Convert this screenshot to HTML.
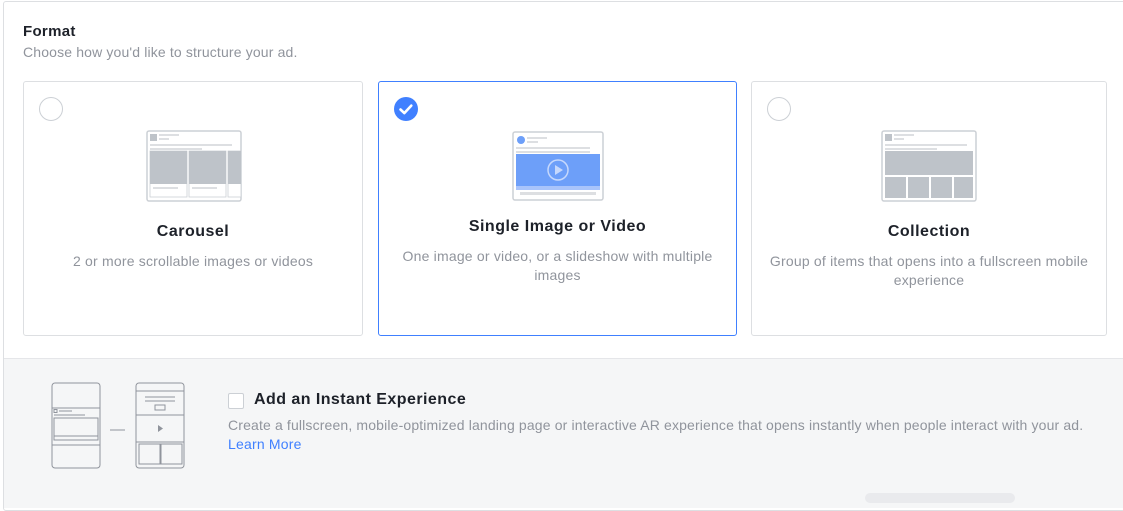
<!DOCTYPE html>
<html><head><meta charset="utf-8"><style>
*{box-sizing:border-box;margin:0;padding:0}
body{width:1123px;height:500px;overflow:hidden;background:#fff;font-family:"Liberation Sans",Arial,sans-serif;position:relative}
.frame{position:absolute;left:3px;top:1px;width:1130px;height:510px;border:1px solid #dddfe2;border-radius:3px;background:#fff}
.abs{position:absolute}
.card{position:absolute;top:81px;height:255px;border:1px solid #dddfe2;border-radius:3px;background:#fff}
.radio{position:absolute;left:15px;top:15px;width:24px;height:24px;border:1px solid #ccd0d5;border-radius:50%}
.title{position:absolute;left:0;right:0;text-align:center;font-weight:bold;font-size:16px;letter-spacing:.5px;color:#1d2129}
.desc{position:absolute;left:15px;right:15px;text-align:center;font-size:14px;letter-spacing:.2px;line-height:19px;color:#90949c}
.gray{position:absolute;left:4px;top:358px;width:1130px;height:150px;background:#f5f6f7;border-top:1px solid #e5e6e9}
</style></head><body>
<div class="frame"></div>
<div class="abs" style="left:23px;top:23px;font-size:15px;font-weight:bold;letter-spacing:.3px;color:#1d2129">Format</div>
<div class="abs" style="left:23px;top:44px;font-size:14px;letter-spacing:.15px;color:#90949c">Choose how you'd like to structure your ad.</div>

<div class="card" style="left:23px;width:340px">
  <div class="radio"></div>
  <svg class="abs" style="left:122px;top:48px" width="96" height="72" viewBox="0 0 96 72">
    <rect x="1" y="1" width="94" height="70" rx="2" fill="#fff" stroke="#ccd0d5" stroke-width="1.5"/>
    <rect x="4" y="4" width="7" height="7" fill="#bec3c9"/><rect x="13" y="4" width="20" height="2" fill="#dddfe2"/><rect x="13" y="8" width="10" height="2" fill="#dddfe2"/>
    <rect x="4" y="14" width="82" height="2" fill="#dddfe2"/><rect x="4" y="18" width="52" height="2" fill="#dddfe2"/>
    <rect x="4" y="21" width="37" height="46" fill="#fff" stroke="#ccd0d5" stroke-width=".8"/><rect x="4" y="21" width="37" height="33" fill="#bec3c9"/>
    <rect x="43" y="21" width="37" height="46" fill="#fff" stroke="#ccd0d5" stroke-width=".8"/><rect x="43" y="21" width="37" height="33" fill="#bec3c9"/>
    <rect x="82" y="21" width="13" height="46" fill="#fff" stroke="#ccd0d5" stroke-width=".8"/><rect x="82" y="21" width="13" height="33" fill="#bec3c9"/>
    <rect x="7" y="57" width="25" height="2" fill="#dddfe2"/><rect x="46" y="57" width="25" height="2" fill="#dddfe2"/>
  </svg>
  <div class="title" style="top:141px">Carousel</div>
  <div class="desc" style="top:170px">2 or more scrollable images or videos</div>
</div>

<div class="card" style="left:378px;width:359px;border-color:#4080ff">
  <svg class="abs" style="left:14px;top:14px" width="26" height="26" viewBox="0 0 26 26"><circle cx="13" cy="13" r="12" fill="#4080ff"/><path d="M7.5 13.5l3.8 3.6 7-7.5" fill="none" stroke="#fff" stroke-width="2.6" stroke-linecap="round" stroke-linejoin="round"/></svg>
  <svg class="abs" style="left:133px;top:49px" width="92" height="70" viewBox="0 0 92 70">
    <rect x="1" y="1" width="90" height="68" rx="2" fill="#fff" stroke="#ccd0d5" stroke-width="1.5"/>
    <circle cx="9" cy="9" r="4" fill="#6d9ff9"/><rect x="15" y="6" width="20" height="2" fill="#dddfe2"/><rect x="15" y="10" width="11" height="2" fill="#dddfe2"/>
    <rect x="4" y="16" width="74" height="2" fill="#dddfe2"/><rect x="4" y="20" width="74" height="2" fill="#dddfe2"/>
    <rect x="4" y="23" width="84" height="32" fill="#6d9ff9"/>
    <circle cx="46" cy="39" r="10" fill="none" stroke="#c6d8fc" stroke-width="1.5"/><path d="M43 34l8 5-8 5z" fill="#c6d8fc"/>
    <rect x="4" y="55" width="84" height="4" fill="#a9c4fb"/><rect x="8" y="61" width="76" height="3" fill="#dddfe2"/>
  </svg>
  <div class="title" style="top:136px">Single Image or Video</div>
  <div class="desc" style="top:165px">One image or video, or a slideshow with multiple images</div>
</div>

<div class="card" style="left:751px;width:356px">
  <div class="radio"></div>
  <svg class="abs" style="left:129px;top:48px" width="96" height="72" viewBox="0 0 96 72">
    <rect x="1" y="1" width="94" height="70" rx="2" fill="#fff" stroke="#ccd0d5" stroke-width="1.5"/>
    <rect x="4" y="4" width="7" height="7" fill="#bec3c9"/><rect x="13" y="4" width="20" height="2" fill="#dddfe2"/><rect x="13" y="8" width="10" height="2" fill="#dddfe2"/>
    <rect x="4" y="14" width="82" height="2" fill="#dddfe2"/><rect x="4" y="18" width="52" height="2" fill="#dddfe2"/>
    <rect x="4" y="21" width="88" height="24" fill="#bec3c9"/>
    <rect x="4" y="47" width="21" height="21" fill="#bec3c9"/><rect x="27" y="47" width="21" height="21" fill="#bec3c9"/><rect x="50" y="47" width="21" height="21" fill="#bec3c9"/><rect x="73" y="47" width="19" height="21" fill="#bec3c9"/>
  </svg>
  <div class="title" style="top:141px">Collection</div>
  <div class="desc" style="top:170px">Group of items that opens into a fullscreen mobile experience</div>
</div>

<div class="gray"></div>
<svg class="abs" style="left:50px;top:381px" width="136" height="90" viewBox="0 0 136 90">
  <g fill="none" stroke="#90949c" stroke-width="1">
    <rect x="2" y="2" width="48" height="85" rx="3"/>
    <line x1="2" y1="27" x2="50" y2="27"/><line x1="2" y1="64" x2="50" y2="64"/>
    <rect x="4" y="28.5" width="3" height="3"/><line x1="9" y1="30" x2="22" y2="30"/><line x1="4" y1="34" x2="35" y2="34"/>
    <rect x="4" y="37" width="44" height="22"/><line x1="4" y1="55" x2="48" y2="55"/>
    <line x1="60" y1="49" x2="75" y2="49"/>
    <rect x="86" y="2" width="48" height="85" rx="3"/>
    <line x1="86" y1="10" x2="134" y2="10"/><line x1="86" y1="34" x2="134" y2="34"/><line x1="86" y1="61" x2="134" y2="61"/>
    <line x1="95" y1="16" x2="125" y2="16"/><line x1="95" y1="20" x2="125" y2="20"/><rect x="105" y="24" width="10" height="5"/>
    <rect x="89" y="63" width="21" height="20"/><rect x="111" y="63" width="21" height="20"/>
  </g>
  <path d="M108 44l5 3.5-5 3.5z" fill="#90949c"/>
</svg>
<div class="abs" style="left:228px;top:393px;width:16px;height:16px;border:1px solid #ccd0d5;border-radius:2px;background:#fff"></div>
<div class="abs" style="left:254px;top:391px;font-size:16px;font-weight:bold;letter-spacing:.45px;color:#1d2129">Add an Instant Experience</div>
<div class="abs" style="left:228px;top:417px;font-size:14px;letter-spacing:.15px;color:#90949c;white-space:nowrap">Create a fullscreen, mobile-optimized landing page or interactive AR experience that opens instantly when people interact with your ad.</div>
<div class="abs" style="left:228px;top:436px;font-size:14px;letter-spacing:.2px;color:#4080ff">Learn More</div>
<div class="abs" style="left:865px;top:493px;width:150px;height:10px;border-radius:5px;background:#e9eaed"></div>
</body></html>
